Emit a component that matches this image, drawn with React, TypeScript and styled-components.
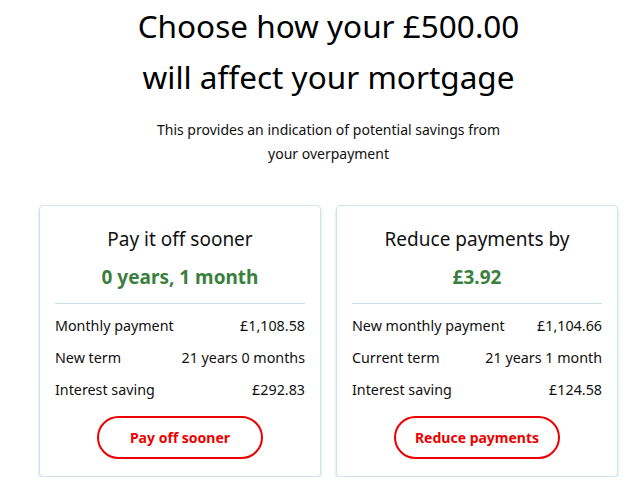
import styled, { createGlobalStyle } from "styled-components";

const GlobalStyle = createGlobalStyle`
  body {
    margin: 0;
    background: #ffffff;
    font-family: "Noto Sans", "Open Sans", sans-serif;
    color: #1a1a1a;
  }
`;

const Page = styled.main`
  width: 643px;
  padding: 0 25px 0 39px;
  box-sizing: border-box;
`;

const Title = styled.h1`
  margin: 0;
  text-align: center;
  font-size: 31.5px;
  font-weight: 400;
  line-height: 51px;
  color: #000;
`;

const Intro = styled.p`
  margin: 16px auto 0;
  width: 360px;
  text-align: center;
  font-size: 14px;
  line-height: 24px;
  color: #111;
`;

const Options = styled.section`
  display: grid;
  grid-template-columns: 282px 282px;
  gap: 15px;
  margin-top: 39px;
`;

const Card = styled.article`
  border: 1px solid #cfe3ea;
  border-radius: 4px;
  box-shadow: 0 2px 3px rgba(110, 160, 175, 0.35);
  padding: 18px 15px 15px;
  display: flex;
  flex-direction: column;
  align-items: stretch;
  height: 272px;
  box-sizing: border-box;
`;

const CardTitle = styled.h2`
  margin: 0;
  text-align: center;
  font-size: 19px;
  font-weight: 400;
  line-height: 30px;
  color: #111;
`;

const Highlight = styled.p`
  margin: 8px 0 0;
  text-align: center;
  font-size: 19px;
  font-weight: 700;
  line-height: 30px;
  color: #3b7f3e;
`;

const Divider = styled.hr`
  margin: 11px 0 6px;
  border: 0;
  border-top: 1px solid #c9dfe7;
`;

const Row = styled.div`
  display: flex;
  justify-content: space-between;
  font-size: 14.3px;
  line-height: 32px;
  color: #111;
`;

const Action = styled.button`
  align-self: center;
  margin-top: 10px;
  width: 166px;
  height: 43px;
  border: 2px solid #ec0000;
  border-radius: 22px;
  background: #fff;
  color: #ec0000;
  font-family: inherit;
  font-size: 14px;
  font-weight: 700;
  cursor: pointer;
`;

type Option = {
  title: string;
  highlight: string;
  rows: [string, string][];
  action: string;
};

const options: Option[] = [
  {
    title: "Pay it off sooner",
    highlight: "0 years, 1 month",
    rows: [
      ["Monthly payment", "£1,108.58"],
      ["New term", "21 years 0 months"],
      ["Interest saving", "£292.83"],
    ],
    action: "Pay off sooner",
  },
  {
    title: "Reduce payments by",
    highlight: "£3.92",
    rows: [
      ["New monthly payment", "£1,104.66"],
      ["Current term", "21 years 1 month"],
      ["Interest saving", "£124.58"],
    ],
    action: "Reduce payments",
  },
];

export default function App() {
  return (
    <Page>
      <GlobalStyle />
      <Title>
        Choose how your £500.00
        <br />
        will affect your mortgage
      </Title>
      <Intro>This provides an indication of potential savings from your overpayment</Intro>
      <Options>
        {options.map((o) => (
          <Card key={o.title}>
            <CardTitle>{o.title}</CardTitle>
            <Highlight>{o.highlight}</Highlight>
            <Divider />
            {o.rows.map(([label, value]) => (
              <Row key={label}>
                <span>{label}</span>
                <span>{value}</span>
              </Row>
            ))}
            <Action>{o.action}</Action>
          </Card>
        ))}
      </Options>
    </Page>
  );
}
